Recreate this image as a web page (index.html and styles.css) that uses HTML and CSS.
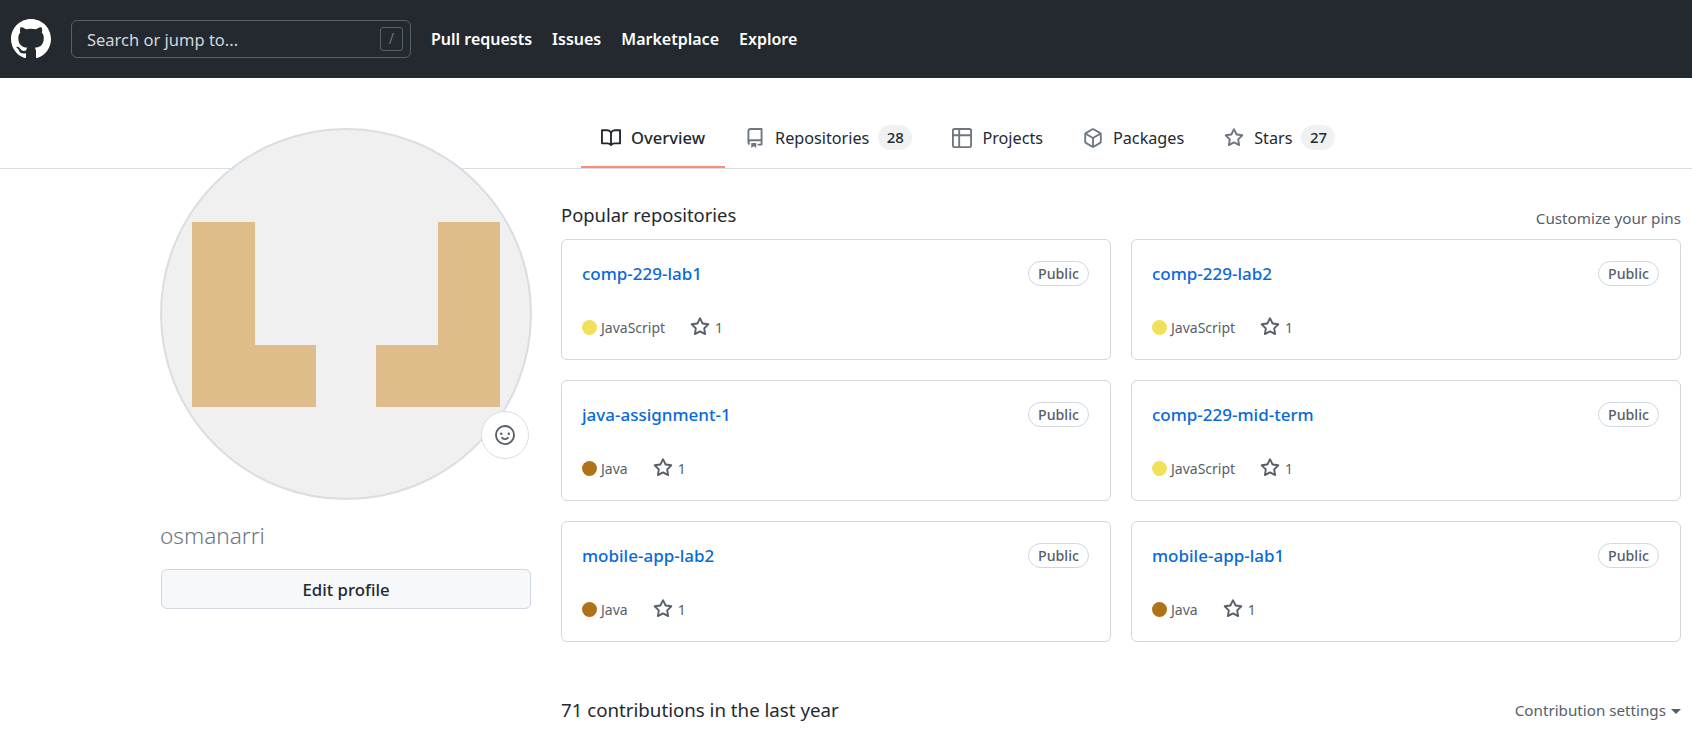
FILE: index.html
```html
<!DOCTYPE html>
<html lang="en">
<head>
    <meta charset="UTF-8">
    <meta name="viewport" content="width=device-width, initial-scale=1.0">
    <title>osmanarri</title>
    <link rel="stylesheet" href="styles.css">
</head>
<body>
    <svg class="icon-defs" aria-hidden="true">
        <symbol id="i-book" viewBox="0 0 16 16"><path d="M0 1.75A.75.75 0 01.75 1h4.253c1.227 0 2.317.59 3 1.501A3.744 3.744 0 0111.006 1h4.245a.75.75 0 01.75.75v10.5a.75.75 0 01-.75.75h-4.507a2.25 2.25 0 00-1.591.659l-.622.621a.75.75 0 01-1.06 0l-.622-.621A2.25 2.25 0 005.258 13H.75a.75.75 0 01-.75-.75V1.75zm8.755 3a2.25 2.25 0 012.25-2.25H14.5v9h-3.757c-.71 0-1.4.201-1.992.572l.004-7.322zm-1.504 7.324l.004-5.073-.002-2.253A2.25 2.25 0 005.003 2.5H1.5v9h3.757a3.75 3.75 0 011.994.574z" fill-rule="evenodd"/></symbol>
        <symbol id="i-repo" viewBox="0 0 16 16"><path d="M2 2.5A2.5 2.5 0 014.5 0h8.75a.75.75 0 01.75.75v12.5a.75.75 0 01-.75.75h-2.5a.75.75 0 110-1.5h1.75v-2h-8a1 1 0 00-.714 1.7.75.75 0 01-1.072 1.05A2.495 2.495 0 012 11.5v-9zm10.5-1V9h-8c-.356 0-.694.074-1 .208V2.5a1 1 0 011-1h8zM5 12.25v3.25a.25.25 0 00.4.2l1.45-1.087a.25.25 0 01.3 0L8.6 15.7a.25.25 0 00.4-.2v-3.25a.25.25 0 00-.25-.25h-3.5a.25.25 0 00-.25.25z" fill-rule="evenodd"/></symbol>
        <symbol id="i-table" viewBox="0 0 16 16"><path d="M0 1.75C0 .784.784 0 1.75 0h12.5C15.216 0 16 .784 16 1.75v12.5A1.75 1.75 0 0114.25 16H1.75A1.75 1.75 0 010 14.25V1.75zM1.5 6.5v7.75c0 .138.112.25.25.25H5v-8H1.5zM5 5H1.5V1.75a.25.25 0 01.25-.25H5V5zm1.5 1.5v8h7.75a.25.25 0 00.25-.25V6.5h-8zm8-1.5h-8V1.5h7.75a.25.25 0 01.25.25V5z" fill-rule="evenodd"/></symbol>
        <symbol id="i-package" viewBox="0 0 16 16"><path d="M8.878.392a1.75 1.75 0 00-1.756 0l-5.25 3.045A1.75 1.75 0 001 4.951v6.098c0 .624.332 1.2.872 1.514l5.25 3.045a1.75 1.75 0 001.756 0l5.25-3.045c.54-.313.872-.89.872-1.514V4.951c0-.624-.332-1.2-.872-1.514L8.878.392zM7.875 1.69a.25.25 0 01.25 0l4.63 2.685L8 7.133 3.245 4.375l4.63-2.685zM2.5 5.677v5.372c0 .09.047.171.125.216l4.625 2.683V8.432L2.5 5.677zm6.25 8.271l4.625-2.683a.25.25 0 00.125-.216V5.677L8.75 8.432v5.516z" fill-rule="evenodd"/></symbol>
        <symbol id="i-star" viewBox="0 0 16 16"><path d="M8 .25a.75.75 0 01.673.418l1.882 3.815 4.21.612a.75.75 0 01.416 1.279l-3.046 2.97.719 4.192a.75.75 0 01-1.088.791L8 12.347l-3.766 1.98a.75.75 0 01-1.088-.79l.72-4.194L.818 6.374a.75.75 0 01.416-1.28l4.21-.611L7.327.668A.75.75 0 018 .25zm0 2.445L6.615 5.5a.75.75 0 01-.564.41l-3.097.45 2.24 2.184a.75.75 0 01.216.664l-.528 3.084 2.769-1.456a.75.75 0 01.698 0l2.77 1.456-.53-3.084a.75.75 0 01.216-.664l2.24-2.183-3.096-.45a.75.75 0 01-.564-.41L8 2.694v.001z" fill-rule="evenodd"/></symbol>
    </svg>

    <header class="topbar">
        <svg class="logo" viewBox="0 0 16 16"><path fill-rule="evenodd" d="M8 0C3.58 0 0 3.58 0 8c0 3.54 2.29 6.53 5.47 7.59.4.07.55-.17.55-.38 0-.19-.01-.82-.01-1.49-2.01.37-2.53-.49-2.69-.94-.09-.23-.48-.94-.82-1.13-.28-.15-.68-.52-.01-.53.63-.01 1.08.58 1.23.82.72 1.21 1.87.87 2.33.66.07-.52.28-.87.51-1.07-1.78-.2-3.64-.89-3.64-3.95 0-.87.31-1.59.82-2.15-.08-.2-.36-1.02.08-2.12 0 0 .67-.21 2.2.82.64-.18 1.32-.27 2-.27.68 0 1.36.09 2 .27 1.53-1.04 2.2-.82 2.2-.82.44 1.1.16 1.92.08 2.12.51.56.82 1.27.82 2.15 0 3.07-1.87 3.75-3.65 3.95.29.25.54.73.54 1.48 0 1.07-.01 1.93-.01 2.2 0 .21.15.46.55.38A8.013 8.013 0 0016 8c0-4.42-3.58-8-8-8z"/></svg>
        <div class="search">
            <span>Search or jump to...</span>
            <kbd class="slash">/</kbd>
        </div>
        <nav class="topnav">
            <a href="#">Pull requests</a>
            <a href="#">Issues</a>
            <a href="#">Marketplace</a>
            <a href="#">Explore</a>
        </nav>
    </header>

    <nav class="tabs">
        <a class="tab active" href="#"><svg class="tab-icon"><use href="#i-book"/></svg>Overview</a>
        <a class="tab" href="#"><svg class="tab-icon"><use href="#i-repo"/></svg>Repositories<span class="counter">28</span></a>
        <a class="tab" href="#"><svg class="tab-icon"><use href="#i-table"/></svg>Projects</a>
        <a class="tab" href="#"><svg class="tab-icon"><use href="#i-package"/></svg>Packages</a>
        <a class="tab" href="#"><svg class="tab-icon"><use href="#i-star"/></svg>Stars<span class="counter">27</span></a>
    </nav>

    <div class="page">
        <aside class="sidebar">
            <div class="avatar">
                <svg class="avatar-art" viewBox="0 0 308 185"><path d="M0 0H63V123H124V185H0ZM308 0V185H184V123H246V0Z"/></svg>
                <button class="status">
                    <svg viewBox="0 0 16 16"><path fill-rule="evenodd" d="M1.5 8a6.5 6.5 0 1113 0 6.5 6.5 0 01-13 0zM8 0a8 8 0 100 16A8 8 0 008 0zM5 8a1 1 0 100-2 1 1 0 000 2zm7-1a1 1 0 11-2 0 1 1 0 012 0zM5.32 9.636a.75.75 0 011.038.175l.007.009c.103.118.22.222.35.31.264.178.683.37 1.285.37.602 0 1.02-.192 1.285-.371.13-.088.247-.192.35-.31l.007-.008a.75.75 0 111.222.87l-.614-.431c.614.43.614.431.613.431v.001l-.001.002-.002.003-.005.007-.014.019a1.984 1.984 0 01-.184.213c-.16.166-.338.316-.53.445-.63.418-1.37.638-2.127.629-.946 0-1.652-.308-2.126-.63a3.32 3.32 0 01-.715-.657l-.014-.02-.005-.006-.002-.003v-.002h-.001l.613-.432-.614.43a.75.75 0 01.183-1.044h.001z"/></svg>
                </button>
            </div>
            <h1 class="username">osmanarri</h1>
            <button class="edit-btn">Edit profile</button>
        </aside>

        <main class="content">
            <div class="section-head">
                <h2>Popular repositories</h2>
                <a href="#">Customize your pins</a>
            </div>
            <div class="repo-grid">
                <div class="repo-card">
                    <div class="repo-top"><a href="#">comp-229-lab1</a><span class="badge">Public</span></div>
                    <div class="repo-meta"><span class="dot js"></span><span class="lang">JavaScript</span><svg class="star"><use href="#i-star"/></svg><span>1</span></div>
                </div>
                <div class="repo-card">
                    <div class="repo-top"><a href="#">comp-229-lab2</a><span class="badge">Public</span></div>
                    <div class="repo-meta"><span class="dot js"></span><span class="lang">JavaScript</span><svg class="star"><use href="#i-star"/></svg><span>1</span></div>
                </div>
                <div class="repo-card">
                    <div class="repo-top"><a href="#">java-assignment-1</a><span class="badge">Public</span></div>
                    <div class="repo-meta"><span class="dot java"></span><span class="lang">Java</span><svg class="star"><use href="#i-star"/></svg><span>1</span></div>
                </div>
                <div class="repo-card">
                    <div class="repo-top"><a href="#">comp-229-mid-term</a><span class="badge">Public</span></div>
                    <div class="repo-meta"><span class="dot js"></span><span class="lang">JavaScript</span><svg class="star"><use href="#i-star"/></svg><span>1</span></div>
                </div>
                <div class="repo-card">
                    <div class="repo-top"><a href="#">mobile-app-lab2</a><span class="badge">Public</span></div>
                    <div class="repo-meta"><span class="dot java"></span><span class="lang">Java</span><svg class="star"><use href="#i-star"/></svg><span>1</span></div>
                </div>
                <div class="repo-card">
                    <div class="repo-top"><a href="#">mobile-app-lab1</a><span class="badge">Public</span></div>
                    <div class="repo-meta"><span class="dot java"></span><span class="lang">Java</span><svg class="star"><use href="#i-star"/></svg><span>1</span></div>
                </div>
            </div>
            <div class="section-head contrib-head">
                <h2>71 contributions in the last year</h2>
                <a href="#">Contribution settings<span class="caret"></span></a>
            </div>
        </main>
    </div>
</body>
</html>
```

FILE: styles.css
```css
html, body {
    height: 732px;
    overflow: hidden;
}
body {
    margin: 0;
    font-family: "Noto Sans", "Open Sans", Arial, sans-serif;
    color: #24292f;
    background-color: #fff;
}
a {
    text-decoration: none;
    color: inherit;
}
.icon-defs {
    display: none;
}

/* top bar */
.topbar {
    height: 78px;
    background-color: #24292f;
    display: flex;
    align-items: center;
    padding-left: 11px;
}
.logo {
    width: 40px;
    height: 40px;
    fill: #fff;
    flex: none;
}
.search {
    width: 340px;
    height: 38px;
    box-sizing: border-box;
    margin-left: 20px;
    padding: 0 7px 0 15px;
    border: 1px solid #57606a;
    border-radius: 6px;
    display: flex;
    align-items: center;
    justify-content: space-between;
    color: #d0d7de;
    font-size: 16.5px;
}
.slash {
    width: 23px;
    height: 24px;
    box-sizing: border-box;
    border: 1px solid #57606a;
    border-radius: 3px;
    color: #8c959f;
    font-family: inherit;
    font-size: 14px;
    font-weight: 300;
    line-height: 22px;
    text-align: center;
}
.topnav {
    display: flex;
    gap: 20px;
    margin-left: 20px;
    color: #fff;
    font-size: 16px;
    font-weight: 600;
}

/* tabs */
.tabs {
    height: 91px;
    box-sizing: border-box;
    padding-left: 581px;
    border-bottom: 1px solid #d8dee4;
    display: flex;
    align-items: flex-end;
}
.tab {
    height: 90px;
    box-sizing: border-box;
    padding: 31px 20px 0;
    display: flex;
    align-items: center;
    font-size: 16.2px;
    border-bottom: 2px solid transparent;
}
.tab.active {
    border-bottom-color: #fd8c73;
    font-size: 16.6px;
    font-weight: 500;
}
.tab-icon {
    width: 20px;
    height: 20px;
    margin-right: 10px;
    fill: #6e7781;
}
.tab.active .tab-icon {
    fill: #24292f;
}
.counter {
    min-width: 34px;
    height: 25px;
    margin-left: 9px;
    border-radius: 13px;
    background-color: #eff1f3;
    font-size: 15px;
    font-weight: 500;
    line-height: 25px;
    text-align: center;
}

/* page */
.page {
    display: flex;
    padding: 0 11px 0 160px;
}
.sidebar {
    width: 372px;
    flex: none;
    margin-top: -41px;
    position: relative;
}
.avatar {
    width: 372px;
    height: 372px;
    box-sizing: border-box;
    border: 2px solid #d8dee4;
    border-radius: 50%;
    background-color: #f0f0f0;
    position: relative;
    display: flex;
    justify-content: center;
    padding-top: 92px;
}
.avatar-art {
    width: 308px;
    height: 185px;
    fill: #dfbd8a;
}
.status {
    position: absolute;
    right: 1px;
    bottom: 39px;
    width: 48px;
    height: 48px;
    padding: 0;
    border: 1px solid #d8dee4;
    border-radius: 50%;
    background-color: #fff;
    display: flex;
    align-items: center;
    justify-content: center;
}
.status svg {
    width: 20px;
    height: 20px;
    fill: #57606a;
}
.username {
    margin: 21px 0 0;
    font-size: 22.6px;
    font-weight: 300;
    line-height: 30px;
    color: #6e7781;
}
.edit-btn {
    display: block;
    width: 370px;
    height: 40px;
    margin: 18px 0 0 1px;
    border: 1px solid #d0d7de;
    border-radius: 6px;
    background-color: #f6f8fa;
    color: #24292f;
    font-family: inherit;
    font-size: 16.8px;
    font-weight: 500;
}
.content {
    flex: 1;
    margin-left: 29px;
    padding-top: 32px;
}
.section-head {
    height: 38px;
    display: flex;
    justify-content: space-between;
    align-items: center;
}
.section-head h2 {
    margin: 0 0 11px;
    font-size: 18.4px;
    font-weight: 400;
}
.section-head a {
    margin-bottom: 5px;
    font-size: 15.2px;
    color: #57606a;
}
.repo-grid {
    display: grid;
    grid-template-columns: 1fr 1fr;
    gap: 20px;
}
.repo-card {
    height: 121px;
    box-sizing: border-box;
    padding: 20px 21px 0 20px;
    border: 1px solid #d0d7de;
    border-radius: 6px;
}
.repo-top {
    display: flex;
    justify-content: space-between;
    align-items: center;
    height: 26px;
}
.repo-top a {
    color: #0969da;
    font-size: 17px;
    font-weight: 500;
}
.badge {
    height: 25px;
    box-sizing: border-box;
    padding: 0 9px;
    border: 1px solid #d0d7de;
    border-radius: 13px;
    color: #57606a;
    font-size: 14.2px;
    font-weight: 500;
    line-height: 23px;
}
.repo-meta {
    display: flex;
    align-items: center;
    margin-top: 31px;
    color: #57606a;
    font-size: 14px;
}
.dot {
    width: 15px;
    height: 15px;
    border-radius: 50%;
    margin-right: 4px;
}
.dot.js {
    background-color: #f1e05a;
}
.dot.java {
    background-color: #b07219;
}
.star {
    width: 20px;
    height: 20px;
    margin: 0 5px 0 25px;
    fill: #57606a;
}
.contrib-head {
    margin-top: 48px;
}
.contrib-head h2 {
    margin: 0;
    font-size: 18.7px;
}
.contrib-head a {
    margin: 2px 0 0;
}
.caret {
    display: inline-block;
    margin-left: 5px;
    border: 5px solid transparent;
    border-top-color: #57606a;
    border-bottom: 0;
    vertical-align: middle;
}
```
